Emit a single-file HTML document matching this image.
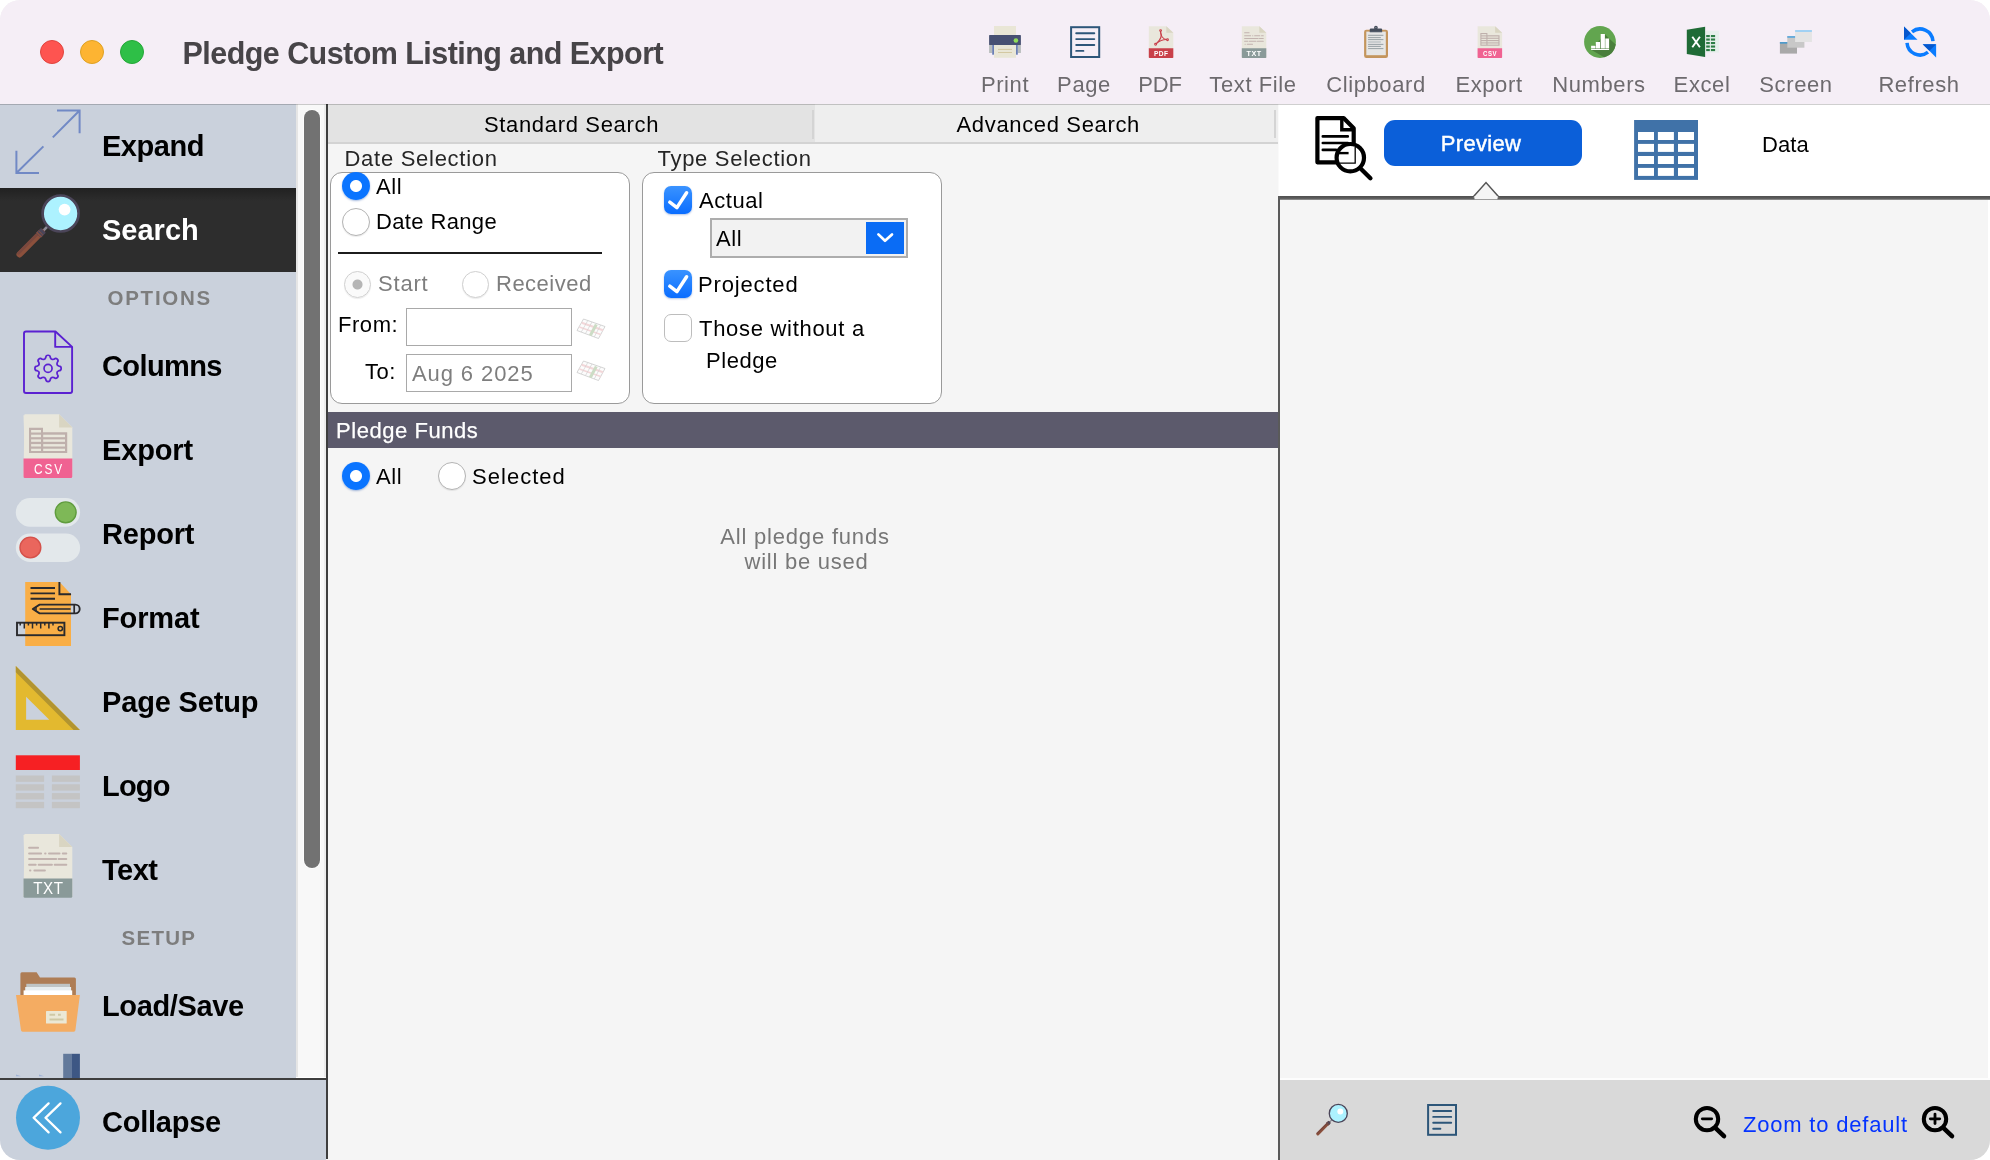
<!DOCTYPE html>
<html lang="en">
<head>
<meta charset="utf-8">
<title>Pledge Custom Listing and Export</title>
<style>
*{box-sizing:border-box;margin:0;padding:0}
html,body{width:1990px;height:1160px;background:#fff;overflow:hidden}
body{font-family:"Liberation Sans",sans-serif;font-size:22px;color:#000;letter-spacing:.55px}
.abs{position:absolute}
#win{will-change:transform;position:absolute;left:0;top:0;width:1990px;height:1160px;border-radius:20px;overflow:hidden;background:#f5f5f5}
/* title bar */
#tb{position:absolute;left:0;top:0;width:1990px;height:104px;background:#f5eef6}
#tbline{position:absolute;left:0;top:104px;width:1990px;height:1px;background:rgba(0,0,0,.19);z-index:5}
.tl{position:absolute;top:40px;width:24px;height:24px;border-radius:50%}
#title{position:absolute;left:182.5px;top:35.6px;font-size:30.5px;font-weight:700;color:#474448;letter-spacing:-.55px;line-height:34px;white-space:nowrap}
.tool{position:absolute;top:72px;height:26px;line-height:26px;font-size:22px;color:#6d6a6e;white-space:nowrap;transform:translateX(-50%);letter-spacing:.6px}
.ticon{position:absolute;top:22px;width:40px;height:40px;transform:translateX(-50%)}
/* sidebar */
#sb{position:absolute;left:0;top:104px;width:296px;height:974px;background:#cad1dc;overflow:hidden}
.si{position:absolute;left:0;width:296px;height:84px}
.si .lbl{position:absolute;left:102px;top:24px;font-size:29px;font-weight:700;line-height:36px;letter-spacing:0;white-space:nowrap}
.si svg{position:absolute;left:0;top:0;width:100px;height:84px}
.sh{position:absolute;white-space:nowrap;font-size:20.5px;font-weight:700;color:#7d7d7d;letter-spacing:1.3px}
#track{position:absolute;left:296px;top:104px;width:30px;height:974px;background:linear-gradient(90deg,#e5e5e5 0,#e5e5e5 2px,#f8f8f8 2.5px,#f8f8f8 27.5px,#ececec 28px,#ececec 100%);border-bottom:1px solid #fff}
#thumb{position:absolute;left:304px;top:110px;width:16px;height:758px;border-radius:8px;background:#727272;box-shadow:0 0 0 1px rgba(255,255,255,.7)}
#vline{position:absolute;left:326px;top:104px;width:2px;height:1055px;background:#3e3e3e}
#sbline{position:absolute;left:0;top:1078px;width:327px;height:2px;background:#3e3e3e}
#col{position:absolute;left:0;top:1080px;width:326px;height:80px;background:#cad1dc}
/* main */
#main{position:absolute;left:328px;top:104px;width:950px;height:1056px;background:#f5f5f5}
.tab{position:absolute;top:104px;height:40px;line-height:41px;text-align:center;font-size:22px;letter-spacing:.5px}
.gl{position:absolute;font-size:22px;line-height:26px;color:#262626;white-space:nowrap}
.box{position:absolute;background:#fff;border:1px solid #9a9a9a;border-radius:12px}
.t{position:absolute;font-size:22px;line-height:26px;white-space:nowrap}
.radio{position:absolute;width:28px;height:28px;border-radius:50%;background:#fff;border:1px solid #b4b4b4;box-shadow:0 1px 1px rgba(0,0,0,.08)}
.radio.on{border:none;background:radial-gradient(circle,#fff 0 5.5px,#0a74ff 6.5px 100%);box-shadow:0 1px 2px rgba(0,60,160,.35)}
.radio.dis{width:27px;height:27px;border-color:#d0d0d0;background:radial-gradient(circle,#b5b5b5 0 4.5px,#fafafa 5.5px 100%)}
.radio.dis0{width:27px;height:27px;border-color:#d0d0d0;background:#fff}
.cb{position:absolute;width:28px;height:28px;border-radius:7px;background:linear-gradient(#3a93ff,#0a6dff);box-shadow:0 1px 2px rgba(0,60,160,.3)}
.cb.off{background:#fff;border:1px solid #bdbdbd;box-shadow:none}
.inp{position:absolute;background:#fff;border:1px solid #a9a9a9;height:38px}
/* right */
#rtop{position:absolute;left:1279px;top:104px;width:711px;height:93px;background:#fff;box-shadow:-1px 0 0 #fafafa}
#rline{position:absolute;left:1278px;top:196px;width:712px;height:4px;background:linear-gradient(#505050,#5c5c5c 60%,#9a9a9a)}
#rv{position:absolute;left:1278px;top:196px;width:2px;height:964px;background:#5a5a5a}
#rbody{position:absolute;left:1280px;top:199px;width:710px;height:879px;background:#f5f5f5;border-right:2px solid #fff}
#rbot{position:absolute;left:1280px;top:1080px;width:710px;height:80px;background:#d9d9d9}
#rbotline{position:absolute;left:1280px;top:1078px;width:710px;height:2px;background:#fdfdfd}
</style>
</head>
<body>
<div id="win">
<!-- TITLEBAR -->
<div id="tb">
 <div class="tl" style="left:40px;background:#fe5450;border:1px solid #e0443e"></div>
 <div class="tl" style="left:80px;background:#fdb432;border:1px solid #dea123"></div>
 <div class="tl" style="left:120px;background:#2ebf47;border:1px solid #24a738"></div>
 <div id="title">Pledge Custom Listing and Export</div>
 <svg class="abs" style="left:960px;top:0" width="1030" height="70" viewBox="960 0 1030 70"><rect x="994" y="26" width="22" height="10" fill="#e9e6d6"/><rect x="989.1" y="45" width="3.2" height="8" fill="#b9bdbd"/><rect x="1017.7" y="45" width="3.2" height="8" fill="#b9bdbd"/><rect x="992.2" y="45" width="1.9" height="9.7" fill="#6a7fb5"/><rect x="1015.9" y="45" width="1.9" height="9.7" fill="#6a7fb5"/><rect x="994" y="45" width="22" height="12.8" fill="#e9e6d6"/><path d="M998 49.4H1012M998 52.5H1012" stroke="#d3c8a2" stroke-width="1" fill="none"/><rect x="989.1" y="35.1" width="31.8" height="10" rx=".6" fill="#475072"/><circle cx="1015.9" cy="40.5" r="2.3" fill="#8fdc5a"/><rect x="1071.1" y="27.2" width="28.1" height="29.8" fill="none" stroke="#2d5679" stroke-width="2"/><path d="M1076.2 33.2h18.1M1076.2 39.1h18.1M1076.2 45.0h18.1M1076.2 50.9h7.2" stroke="#2d5679" stroke-width="1.9" stroke-linecap="round" fill="none"/><path d="M1148.8 26.2H1166.3L1173.3 32.8V58.0H1148.8z" fill="#e9e7dc"/><path d="M1166.3 26.2L1173.3 32.8H1166.3z" fill="#d9d5c2"/><path d="M1148.8 48.3H1173.3V57.2a.8 .8 0 0 1-.8 .8H1149.6a.8 .8 0 0 1-.8-.8z" fill="#c9404a"/><g fill="none" stroke="#c9404a" stroke-width="1.05" stroke-linecap="round"><path d="M1160.500 31.400C1162.200 35.200 1160.800 39.800 1156.300 43.600"/><path d="M1156.300 43.600C1159.200 41.200 1163.300 39.700 1166.600 39.600"/><path d="M1166.600 39.600C1163.300 39.300 1160.200 35.600 1160.500 31.400"/><circle cx="1160.600" cy="30.600" r=".9"/><circle cx="1155.600" cy="44.300" r=".95"/><circle cx="1167.500" cy="39.700" r=".9"/></g><text x="1161.2" y="56" font-family="Liberation Sans, sans-serif" font-weight="700" font-size="7.6" fill="#fff" text-anchor="middle" textLength="14.6" lengthAdjust="spacingAndGlyphs">PDF</text><path d="M1241.8 26.2H1259.3L1266.3 32.8V58.0H1241.8z" fill="#e9e7dc"/><path d="M1259.3 26.2L1266.3 32.8H1259.3z" fill="#d9d5c2"/><path d="M1241.8 48.3H1266.3V57.2a.8 .8 0 0 1-.8 .8H1242.6a.8 .8 0 0 1-.8-.8z" fill="#8a9a99"/><g transform="translate(1230.003 22.9382) scale(0.502)"><path d="M29.1 19.7H38.1M29.1 25.4H41.1M45.1 25.4H45.5M49.0 25.4H59.5M62.8 25.4H66.3M29.1 31.0H56.2M58.6 31.0H66.3M29.1 36.7H35.7M38.7 36.7H51.9M54.7 36.7H66.3M30.0 42.4H30.4M34.4 42.4H44.9" stroke="#c2b3af" stroke-width="2" stroke-linecap="round" fill="none"/></g><text x="1254.2" y="56" font-family="Liberation Sans, sans-serif" font-weight="700" font-size="7.6" fill="#fff" text-anchor="middle" textLength="15.2" lengthAdjust="spacingAndGlyphs">TXT</text><rect x="1364.1" y="29.8" width="23.9" height="28.2" rx="2.2" fill="#c4955d"/><rect x="1366.3" y="31.6" width="19.5" height="23.6" fill="#e6e6e6"/><path d="M1368.1 35.3h15.3M1368.1 37.6h12.8M1368.1 39.6h15.3M1368.1 44.4h15.3M1368.1 46.4h12.8M1368.1 48.6h15.3" stroke="#8e999d" stroke-width=".9" fill="none"/><path d="M1368.1 42h12.8" stroke="#c2c7c9" stroke-width="1.6" fill="none"/><circle cx="1375.9" cy="27.7" r="1.9" fill="#464e5c"/><circle cx="1375.9" cy="27.500" r=".6" fill="#9aa0aa"/><path d="M1370.8 28.600h10.300a1 1 0 0 1 1 1v2.400h-12.300v-2.400a1 1 0 0 1 1-1z" fill="#464e5c"/><rect x="1369.800" y="31.4" width="12.300" height=".9" fill="#5a6372"/><path d="M1477.6 26.2H1495.1L1502.1 32.8V58.0H1477.6z" fill="#e9e7dc"/><path d="M1495.1 26.2L1502.1 32.8H1495.1z" fill="#d9d5c2"/><path d="M1477.6 48.3H1502.1V57.2a.8 .8 0 0 1-.8 .8H1478.4a.8 .8 0 0 1-.8-.8z" fill="#f06292"/><g transform="translate(1465.8029999999999 23.037399999999998) scale(0.502)"><path d="M29 19.8H43V24.2H67.2V45.1H29z" fill="#bfb0ac"/><rect x="31.1" y="22.0" width="9.9" height="2.5" fill="#e9e7dc"/><rect x="31.1" y="26.7" width="9.9" height="2.5" fill="#e9e7dc"/><rect x="43.2" y="26.7" width="21.8" height="2.5" fill="#e9e7dc"/><rect x="31.1" y="31.4" width="9.9" height="2.4" fill="#e9e7dc"/><rect x="43.2" y="31.4" width="21.8" height="2.4" fill="#e9e7dc"/><rect x="31.1" y="36.1" width="9.9" height="2.4" fill="#e9e7dc"/><rect x="43.2" y="36.1" width="21.8" height="2.4" fill="#e9e7dc"/><rect x="31.1" y="40.7" width="9.9" height="2.3" fill="#e9e7dc"/><rect x="43.2" y="40.7" width="21.8" height="2.3" fill="#e9e7dc"/></g><text x="1490.0" y="56" font-family="Liberation Sans, sans-serif" font-weight="700" font-size="7.4" fill="#fff" text-anchor="middle" textLength="13.8" lengthAdjust="spacingAndGlyphs">CSV</text><circle cx="1600" cy="42" r="15.9" fill="#62a54f"/><path d="M1609.100 38.500L1604.900 34.300L1591.100 49.800L1604.200 57.350A15.900 15.900 0 0 0 1615.780 44.600z" fill="#4a7f3c"/><path d="M1591.100 45.800h4.300v2.800h-4.300zM1595.800 42h4.200v6.600h-4.200zM1600.700 34h4.200v14.600h-4.200zM1605.300 38.500h3.800v10.100h-3.800zM1591.100 48.900h18v1h-18z" fill="#fff"/><rect x="1704" y="30.8" width="14.900" height="21.800" fill="#e6efeb"/><rect x="1706.2" y="35.0" width="3.600" height="2.100" fill="#2d7d45"/><rect x="1710.9" y="35.0" width="4.200" height="2.100" fill="#2d7d45"/><rect x="1706.2" y="38.5" width="3.600" height="2.100" fill="#2d7d45"/><rect x="1710.9" y="38.5" width="4.200" height="2.100" fill="#2d7d45"/><rect x="1706.2" y="42.0" width="3.600" height="2.100" fill="#2d7d45"/><rect x="1710.9" y="42.0" width="4.200" height="2.100" fill="#2d7d45"/><rect x="1706.2" y="45.5" width="3.600" height="2.100" fill="#2d7d45"/><rect x="1710.9" y="45.5" width="4.200" height="2.100" fill="#2d7d45"/><rect x="1706.2" y="49.0" width="3.600" height="2.100" fill="#2d7d45"/><rect x="1710.9" y="49.0" width="4.200" height="2.100" fill="#2d7d45"/><path d="M1686.800 29.800L1705.100 26.800V57.100L1686.800 54z" fill="#1f6b36"/><path d="M1692.300 36.700L1699.900 47.300M1699.900 36.700L1692.300 47.300" stroke="#fff" stroke-width="1.900" fill="none"/><rect x="1779.900" y="42" width="17.100" height="11.600" fill="#a9a9a9"/><rect x="1779.900" y="42" width="17.100" height="1.700" fill="#4e9acb"/><rect x="1787.300" y="36.100" width="17.100" height="11.600" fill="#c8c8c8"/><rect x="1787.300" y="36.100" width="17.100" height="1.700" fill="#5ba8dd"/><rect x="1795.100" y="30.200" width="16.800" height="11.800" fill="#e4e4e4"/><rect x="1795.100" y="30.200" width="16.800" height="1.600" fill="#8fcdf7"/><path d="M1912.00 31.76A13 13 0 0 1 1932.97 41.09" fill="none" stroke="#0a7cff" stroke-width="3.500"/><path d="M1907.03 42.91A13 13 0 0 0 1928.00 52.24" fill="none" stroke="#0a7cff" stroke-width="3.500"/><path d="M1904 26.500V39.800H1917.500z" fill="#0a7cff"/><path d="M1904 26.500V39.800L1910.750 33.150z" fill="#0657cc"/><path d="M1936.100 57.500V44.200H1922.700z" fill="#0a7cff"/><path d="M1922.700 44.200H1936.100L1929.400 50.850z" fill="#0657cc"/></svg>
 <div class="tool" style="left:1005px">Print</div>
 <div class="tool" style="left:1084px">Page</div>
 <div class="tool" style="left:1160px;letter-spacing:-.2px">PDF</div>
 <div class="tool" style="left:1253px">Text File</div>
 <div class="tool" style="left:1376px">Clipboard</div>
 <div class="tool" style="left:1489px">Export</div>
 <div class="tool" style="left:1599px">Numbers</div>
 <div class="tool" style="left:1702px">Excel</div>
 <div class="tool" style="left:1796px">Screen</div>
 <div class="tool" style="left:1919px">Refresh</div>
</div>
<div id="tbline"></div>

<!-- SIDEBAR -->
<div id="sb">
 <div class="si" style="top:0px"><svg viewBox="0 0 100 84"><g fill="none" stroke="#7189c5" stroke-width="2"><path d="M57 6.5H79.6V29.2M79.3 6.8L52.8 33.4"/><path d="M39 69H16.4V46.8M16.7 68.7L43.4 42.4"/></g></svg><div class="lbl" style="letter-spacing:-0.48px">Expand</div></div>
 <div class="si" style="top:84px;background:linear-gradient(#212121,#2d2d2d 13px);color:#fff"><svg viewBox="0 0 100 84"><g transform="translate(0 0) scale(1)"><path d="M47.8 38.2L42.6 43.4" stroke="#8d8b96" stroke-width="2.6" fill="none"/><path d="M41.6 44.1L19.6 66.4" stroke="#8b503c" stroke-width="6.2" stroke-linecap="round" fill="none"/><path d="M40.4 42.9L18.4 65.2" stroke="#74463f" stroke-width="2.8" stroke-linecap="round" fill="none" opacity=".75"/><path d="M43.4 42.3L38.4 47.4" stroke="#4b4559" stroke-width="6.8" fill="none"/><path d="M41.0 44.7L38.6 47.1" stroke="#8b503c" stroke-width="6.8" fill="none"/><path d="M40.6 45.1L39.6 46.1" stroke="#4b4559" stroke-width="6.8" fill="none"/><circle cx="60.6" cy="25.5" r="18" fill="#adf2ff" stroke="#4b4559" stroke-width="2.7"/><circle cx="64.6" cy="21.6" r="5.9" fill="#fff"/></g></svg><div class="lbl" style="letter-spacing:0px">Search</div></div>
 <div class="sh" style="top:182px;left:107.5px;letter-spacing:1.75px">OPTIONS</div>
 <div class="si" style="top:220px"><svg viewBox="0 0 100 84"><g fill="none" stroke="#5b21d1" stroke-width="1.9" stroke-linejoin="round"><path d="M26 7.5H55.5L72.1 22.9V67a2 2 0 0 1-2 2H26a2 2 0 0 1-2-2V9.5a2 2 0 0 1 2-2z"/><path d="M55.2 7.5V22.9H72.1"/><path stroke-width="1.7" d="M44.85 35.03L45.80 33.50A2.25 2.25 0 0 1 50.30 33.50L51.25 35.03A9.90 9.90 0 0 1 52.41 35.51L52.41 35.51L54.17 35.10A2.25 2.25 0 0 1 57.35 38.28L56.94 40.04A9.90 9.90 0 0 1 57.42 41.20L57.42 41.20L58.95 42.15A2.25 2.25 0 0 1 58.95 46.65L57.42 47.60A9.90 9.90 0 0 1 56.94 48.76L56.94 48.76L57.35 50.52A2.25 2.25 0 0 1 54.17 53.70L52.41 53.29A9.90 9.90 0 0 1 51.25 53.77L51.25 53.77L50.30 55.30A2.25 2.25 0 0 1 45.80 55.30L44.85 53.77A9.90 9.90 0 0 1 43.69 53.29L43.69 53.29L41.93 53.70A2.25 2.25 0 0 1 38.75 50.52L39.16 48.76A9.90 9.90 0 0 1 38.68 47.60L38.68 47.60L37.15 46.65A2.25 2.25 0 0 1 37.15 42.15L38.68 41.20A9.90 9.90 0 0 1 39.16 40.04L39.16 40.04L38.75 38.28A2.25 2.25 0 0 1 41.93 35.10L43.69 35.51A9.90 9.90 0 0 1 44.85 35.03Z"/><circle cx="48.05" cy="44.4" r="4" stroke-width="1.7"/></g></svg><div class="lbl" style="letter-spacing:-0.6px">Columns</div></div>
 <div class="si" style="top:304px"><svg viewBox="0 0 100 84"><path d="M24.5 6.3H59.1L72.3 19.5V68.9H23.5z" fill="#e9e7dc"/><path d="M23.5 7.3H25.5V68.9z" fill="#e9e7dc"/><path d="M59.1 6.3L72.3 19.5H59.1z" fill="#d9d5c2"/><path d="M23.5 50.6H72.3V68.4a1.5 1.5 0 0 1-1.5 1.5H25.0a1.5 1.5 0 0 1-1.5-1.5z" fill="#f06292"/><g transform="translate(0 0) scale(1)"><path d="M29 19.8H43V24.2H67.2V45.1H29z" fill="#bfb0ac"/><rect x="31.1" y="22.0" width="9.9" height="2.5" fill="#e9e7dc"/><rect x="31.1" y="26.7" width="9.9" height="2.5" fill="#e9e7dc"/><rect x="43.2" y="26.7" width="21.8" height="2.5" fill="#e9e7dc"/><rect x="31.1" y="31.4" width="9.9" height="2.4" fill="#e9e7dc"/><rect x="43.2" y="31.4" width="21.8" height="2.4" fill="#e9e7dc"/><rect x="31.1" y="36.1" width="9.9" height="2.4" fill="#e9e7dc"/><rect x="43.2" y="36.1" width="21.8" height="2.4" fill="#e9e7dc"/><rect x="31.1" y="40.7" width="9.9" height="2.3" fill="#e9e7dc"/><rect x="43.2" y="40.7" width="21.8" height="2.3" fill="#e9e7dc"/></g><text transform="translate(49.1 66.3) scale(0.78 1)" font-family="Liberation Sans, sans-serif" font-size="15.2" fill="#fff" text-anchor="middle" letter-spacing="2.4">CSV</text></svg><div class="lbl" style="letter-spacing:-0.16px">Export</div></div>
 <div class="si" style="top:388px"><svg viewBox="0 0 100 84"><rect x="15.8" y="6.1" width="64.3" height="28.6" rx="14.3" fill="#e3e8eb"/><circle cx="65.7" cy="20.3" r="10.4" fill="#7eb857" stroke="#5f9c3d" stroke-width="1.4"/><rect x="15.8" y="41.5" width="64.3" height="28.4" rx="14.2" fill="#e3e8eb"/><circle cx="30.4" cy="55.5" r="10.4" fill="#ea665d" stroke="#d5514a" stroke-width="1.4"/></svg><div class="lbl" style="letter-spacing:-0.2px">Report</div></div>
 <div class="si" style="top:472px"><svg viewBox="0 0 100 84"><path d="M25.2 6.1H59.6L71 18.2V69.9H25.2z" fill="#f9ae46"/><g fill="none" stroke="#2a2a2d" stroke-width="1.9"><path d="M59.4 6.1V18.3H71"/><path d="M30.5 12H55M30.5 17.4H55M30.5 22.7H55"/><path d="M39.6 28.6H75.3A4.4 4.4 0 0 1 75.3 37.4H39.6L32.8 33z" stroke-linejoin="round"/><path d="M39.6 33H70.6M74.2 28.6V37.4" stroke-width="1.7"/><path d="M36 30.8V35.2" stroke-width="1.5"/><rect x="17" y="46.7" width="47.4" height="12.5"/><path d="M20.2 46.7V49.6M24.3 46.7V52.4M28.4 46.7V49.6M32.5 46.7V52.4M36.6 46.7V49.6M40.7 46.7V52.4M44.8 46.7V49.6M48.9 46.7V52.4M53.0 46.7V49.6" stroke-width="1.5"/><circle cx="60.3" cy="52.6" r="2.2" stroke-width="1.5"/></g></svg><div class="lbl" style="letter-spacing:-0.12px">Format</div></div>
 <div class="si" style="top:556px"><svg viewBox="0 0 100 84"><path d="M15.8 5.9V69.9H79.9z" fill="#e3b92f"/><path d="M15.8 5.9L79.9 69.9H73.6L15.8 12.2z" fill="#b29430"/><path d="M26.1 36.7V59.8H49.3z" fill="#cad1dc"/></svg><div class="lbl" style="letter-spacing:-0.16px">Page Setup</div></div>
 <div class="si" style="top:640px"><svg viewBox="0 0 100 84"><rect x="15.8" y="11.3" width="64.1" height="14.7" fill="#f62023"/><rect x="15.8" y="31.5" width="28.3" height="6.3" fill="#c4c4c4"/><rect x="51.9" y="31.5" width="28" height="6.3" fill="#c4c4c4"/><rect x="15.8" y="40.3" width="28.3" height="6.3" fill="#c4c4c4"/><rect x="51.9" y="40.3" width="28" height="6.3" fill="#c4c4c4"/><rect x="15.8" y="49.1" width="28.3" height="6.3" fill="#c4c4c4"/><rect x="51.9" y="49.1" width="28" height="6.3" fill="#c4c4c4"/><rect x="15.8" y="57.9" width="28.3" height="6.3" fill="#c4c4c4"/><rect x="51.9" y="57.9" width="28" height="6.3" fill="#c4c4c4"/></svg><div class="lbl" style="letter-spacing:-.8px">Logo</div></div>
 <div class="si" style="top:724px"><svg viewBox="0 0 100 84"><path d="M24.5 5.9H59.1L72.3 19.1V68.8H23.5z" fill="#e9e7dc"/><path d="M23.5 6.9H25.5V68.8z" fill="#e9e7dc"/><path d="M59.1 5.9L72.3 19.1H59.1z" fill="#d9d5c2"/><path d="M23.5 50.5H72.3V68.3a1.5 1.5 0 0 1-1.5 1.5H25.0a1.5 1.5 0 0 1-1.5-1.5z" fill="#8a9a99"/><g transform="translate(0 0) scale(1)"><path d="M29.1 19.7H38.1M29.1 25.4H41.1M45.1 25.4H45.5M49.0 25.4H59.5M62.8 25.4H66.3M29.1 31.0H56.2M58.6 31.0H66.3M29.1 36.7H35.7M38.7 36.7H51.9M54.7 36.7H66.3M30.0 42.4H30.4M34.4 42.4H44.9" stroke="#c2b3af" stroke-width="2" stroke-linecap="round" fill="none"/></g><text transform="translate(48.4 66.2) scale(0.96 1)" font-family="Liberation Sans, sans-serif" font-size="15.8" fill="#fff" text-anchor="middle" letter-spacing="0.5">TXT</text></svg><div class="lbl" style="letter-spacing:-0.5px">Text</div></div>
 <div class="sh" style="top:822px;left:121.5px">SETUP</div>
 <div class="si" style="top:860px"><svg viewBox="0 0 100 84"><path d="M20.4 9.7a1.5 1.5 0 0 1 1.5-1.5H36.6L40 13.4H74.4a1.5 1.5 0 0 1 1.5 1.5V34H20.4z" fill="#ae7d55"/><rect x="26.3" y="19.8" width="43.7" height="5" fill="#bfc4c4"/><rect x="25.2" y="23" width="45.9" height="6" fill="#e7edef"/><rect x="23.6" y="26.4" width="48.6" height="7" fill="#ffffff"/><path d="M16 30.9H79.9L75.4 66.3a1.6 1.6 0 0 1-1.6 1.4H22.6a1.6 1.6 0 0 1-1.6-1.4z" fill="#f4ac62"/><rect x="46" y="46.9" width="20.7" height="12.7" rx=".6" fill="#ebe8d5"/><path d="M49.5 50.7H55.1M58 50.7H60.8M49.5 55.5H63.5" stroke="#cfc9a5" stroke-width="1.9" fill="none"/></svg><div class="lbl" style="letter-spacing:-0.36px">Load/Save</div></div>
 <div class="si" style="top:944px"><svg viewBox="0 0 100 84"><rect x="63.2" y="5.8" width="8.4" height="30" fill="#62799b"/><rect x="71.5" y="5.8" width="8.4" height="30" fill="#3d5784"/><path d="M16 26.5L21 28.3H16zM39 26.5L44 28.3H39z" fill="#9fb2d6"/></svg></div>
</div>
<div id="track"></div><div id="thumb"></div>
<div id="col"><svg class="abs" style="left:0;top:0" width="100" height="80" viewBox="0 0 100 80"><circle cx="48" cy="37.8" r="32" fill="#4ca6dc"/><path d="M48.6 23.4L33.6 37.8L48.6 52.4M60.5 23.4L45.5 37.8L60.5 52.4" fill="none" stroke="#fff" stroke-width="2.3" stroke-linecap="round" stroke-linejoin="round"/></svg><div class="abs" style="left:102px;top:24px;font-size:29px;font-weight:700;line-height:36px;letter-spacing:-.24px">Collapse</div></div>
<div id="sbline"></div><div id="vline"></div>

<!-- MAIN -->
<div id="main"></div>
<div class="tab" style="left:328px;width:487px;background:#e3e3e3;border-bottom:2px solid #d3d3d3;letter-spacing:.67px">Standard Search</div>
<div class="tab" style="left:815px;width:463px;padding-left:3.5px;background:#eeeeee;border-bottom:2px solid #d3d3d3;letter-spacing:.65px">Advanced Search</div>
<div class="abs" style="left:812px;top:110px;width:2px;height:29px;background:#d4d4d4"></div>
<div class="abs" style="left:1274px;top:110px;width:2px;height:28px;background:#d4d4d4"></div>
<div class="gl" style="left:344.5px;top:146px;letter-spacing:.72px">Date Selection</div>
<div class="gl" style="left:657.5px;top:146px;letter-spacing:.71px">Type Selection</div>
<div class="box" style="left:330px;top:172px;width:300px;height:232px"></div>
<div class="box" style="left:642px;top:172px;width:300px;height:232px"></div>
<!-- date box -->
<div class="radio on" style="left:342px;top:172px"></div><div class="t" style="left:376px;top:174px">All</div>
<div class="radio" style="left:342px;top:208px"></div><div class="t" style="left:376px;top:209px;letter-spacing:.36px">Date Range</div>
<div class="abs" style="left:338px;top:252px;width:264px;height:2px;background:#1c1c1c"></div>
<div class="radio dis" style="left:344px;top:271px"></div><div class="t" style="left:378px;top:271px;color:#7e7e7e;letter-spacing:.8px">Start</div>
<div class="radio dis0" style="left:462px;top:271px"></div><div class="t" style="left:496px;top:271px;color:#7e7e7e;letter-spacing:.5px">Received</div>
<div class="t" style="left:338px;top:312px">From:</div>
<div class="inp" style="left:406px;top:308px;width:166px"></div>
<div class="t" style="left:365px;top:359px">To:</div>
<div class="inp" style="left:406px;top:354px;width:166px"></div><div class="t" style="left:412px;top:361px;color:#7e7e7e;letter-spacing:.9px">Aug 6 2025</div>
<svg class="abs" style="left:576px;top:318px;opacity:.62" width="30" height="22" viewBox="0 0 30 22"><path d="M7.5 1L29 8.500L22.500 20.500L1 12.500z" fill="#fbfbfb" stroke="#a8a8a8" stroke-width=".8"/><path d="M5.700 4.800L27 12.300" stroke="#ecc0c3" stroke-width="2.200"/><path d="M3.400 8.900L24.700 16.400" stroke="#ecc0c3" stroke-width="1.600"/><path d="M20.300 6.500L14.300 17.500" stroke="#aec7a3" stroke-width="3"/><path d="M11.800 2.500L5.300 14M16 4L9.500 15.500M24.700 7L18.200 19" stroke="#b5b5b5" stroke-width=".7" fill="none"/></svg><svg class="abs" style="left:576px;top:360px;opacity:.62" width="30" height="22" viewBox="0 0 30 22"><path d="M7.5 1L29 8.500L22.500 20.500L1 12.500z" fill="#fbfbfb" stroke="#a8a8a8" stroke-width=".8"/><path d="M5.700 4.800L27 12.300" stroke="#ecc0c3" stroke-width="2.200"/><path d="M3.400 8.900L24.700 16.400" stroke="#ecc0c3" stroke-width="1.600"/><path d="M20.300 6.500L14.300 17.500" stroke="#aec7a3" stroke-width="3"/><path d="M11.800 2.500L5.300 14M16 4L9.500 15.500M24.700 7L18.200 19" stroke="#b5b5b5" stroke-width=".7" fill="none"/></svg>
<!-- type box -->
<div class="cb" style="left:664px;top:186px"><svg class="abs" style="left:0;top:0" width="28" height="28" viewBox="0 0 28 28"><path d="M5.800 16.200L12.900 21.600L22.600 6.800" fill="none" stroke="#fff" stroke-width="3.500" stroke-linecap="round" stroke-linejoin="round"/></svg></div><div class="t" style="left:699px;top:188px">Actual</div>
<div class="abs" style="left:710px;top:218px;width:198px;height:40px;background:#f2f2f2;border:2px solid #adadad"></div>
<div class="t" style="left:716px;top:226px">All</div>
<div class="abs" style="left:866px;top:222px;width:38px;height:32px;background:#0a6cf5"><svg class="abs" style="left:0;top:0" width="38" height="32" viewBox="0 0 38 32"><path d="M12.400 12.400L19 18.800L26 12.400" fill="none" stroke="#fff" stroke-width="2.700" stroke-linecap="round" stroke-linejoin="round"/></svg></div>
<div class="cb" style="left:664px;top:270px"><svg class="abs" style="left:0;top:0" width="28" height="28" viewBox="0 0 28 28"><path d="M5.800 16.200L12.900 21.600L22.600 6.800" fill="none" stroke="#fff" stroke-width="3.500" stroke-linecap="round" stroke-linejoin="round"/></svg></div><div class="t" style="left:698px;top:272px;letter-spacing:.84px">Projected</div>
<div class="cb off" style="left:664px;top:314px"></div><div class="t" style="left:699px;top:316px;letter-spacing:.7px">Those without a</div>
<div class="t" style="left:706px;top:348px">Pledge</div>
<!-- pledge funds -->
<div class="abs" style="left:328px;top:412px;width:950px;height:36px;background:#5c5a6c"></div>
<div class="t" style="left:336px;top:418px;color:#fff;-webkit-text-stroke:.25px #fff">Pledge Funds</div>
<div class="radio on" style="left:342px;top:462px"></div><div class="t" style="left:376px;top:464px">All</div>
<div class="radio" style="left:438px;top:462px"></div><div class="t" style="left:472px;top:464px;letter-spacing:1.03px">Selected</div>
<div class="t" style="left:605px;width:400px;top:524px;text-align:center;color:#777;letter-spacing:.81px">All pledge funds</div>
<div class="t" style="left:605px;width:400px;top:549px;text-align:center;color:#777;letter-spacing:.75px;padding-left:3px">will be used</div>

<!-- RIGHT -->
<div id="rtop"></div><div id="rbody"></div><div id="rbot"></div><div id="rbotline"></div>
<div id="rline"></div><div id="rv"></div>
<svg class="abs" style="left:1300px;top:106px" width="420" height="95" viewBox="1300 106 420 95"><g fill="none" stroke="#000" stroke-linejoin="miter"><path d="M1317.400 118.100H1343.600L1353.700 128.200V162.300H1317.400z" stroke-width="4.200" stroke-linejoin="round"/><path d="M1341.800 118.100V129.800H1353.700" stroke-width="3.400"/><path d="M1322.800 136.400H1347.800M1322.800 143H1347.800M1322.800 149.900H1336" stroke-width="2.600" stroke-linecap="round"/></g><circle cx="1350.300" cy="157.700" r="13.700" fill="#fff" stroke="#000" stroke-width="4.200"/><path d="M1355.200 147V163.200H1339.500" fill="none" stroke="#000" stroke-width="1.300"/><path d="M1339 153.100H1348.600" fill="none" stroke="#000" stroke-width="2.400"/><path d="M1360.300 168.300L1370.400 178.200" fill="none" stroke="#000" stroke-width="4.400" stroke-linecap="round"/><path d="M1472.700 197.600L1486 182.600L1499.300 197.600" fill="#f5f5f5" stroke="#555" stroke-width="1.500"/><rect x="1474.500" y="196" width="23" height="3.200" fill="#f5f5f5"/><rect x="1634.100" y="120" width="63.900" height="59.900" fill="#4072a8"/><g fill="#fff"><rect x="1638.0" y="132.0" width="16" height="8"/><rect x="1638.0" y="143.9" width="16" height="8"/><rect x="1638.0" y="156.0" width="16" height="8"/><rect x="1638.0" y="167.9" width="16" height="8"/><rect x="1657.9" y="132.0" width="16" height="8"/><rect x="1657.9" y="143.9" width="16" height="8"/><rect x="1657.9" y="156.0" width="16" height="8"/><rect x="1657.9" y="167.9" width="16" height="8"/><rect x="1678.0" y="132.0" width="16" height="8"/><rect x="1678.0" y="143.9" width="16" height="8"/><rect x="1678.0" y="156.0" width="16" height="8"/><rect x="1678.0" y="167.9" width="16" height="8"/></g></svg>
<div class="abs" style="left:1384px;top:120px;width:198px;height:46px;border-radius:11px;background:#0b5fd9;color:#fff;text-align:center;line-height:47px;font-size:22px;font-weight:400;letter-spacing:.3px;padding-right:4px;-webkit-text-stroke:.45px #fff">Preview</div>

<div class="t" style="left:1762px;top:132px;font-size:22px;letter-spacing:.1px">Data</div>

<svg class="abs" style="left:1300px;top:1090px" width="680" height="60" viewBox="1300 1090 680 60"><g transform="translate(1308.0 1100.7) scale(0.5)"><path d="M47.8 38.2L42.6 43.4" stroke="#8d8b96" stroke-width="2.6" fill="none"/><path d="M41.6 44.1L19.6 66.4" stroke="#8b503c" stroke-width="6.2" stroke-linecap="round" fill="none"/><path d="M40.4 42.9L18.4 65.2" stroke="#74463f" stroke-width="2.8" stroke-linecap="round" fill="none" opacity=".75"/><path d="M43.4 42.3L38.4 47.4" stroke="#4b4559" stroke-width="6.8" fill="none"/><path d="M41.0 44.7L38.6 47.1" stroke="#8b503c" stroke-width="6.8" fill="none"/><path d="M40.6 45.1L39.6 46.1" stroke="#4b4559" stroke-width="6.8" fill="none"/><circle cx="60.6" cy="25.5" r="18" fill="#adf2ff" stroke="#4b4559" stroke-width="2.7"/><circle cx="64.6" cy="21.6" r="5.9" fill="#fff"/></g><rect x="1428.1" y="1105.0" width="27.900" height="29.800" fill="none" stroke="#2d5679" stroke-width="2"/><path d="M1433.2 1111.0h18M1433.2 1116.9h18M1433.2 1122.8h18M1433.2 1128.7h7.200" stroke="#2d5679" stroke-width="1.900" stroke-linecap="round" fill="none"/><circle cx="1707.0" cy="1119.100" r="11.200" fill="none" stroke="#000" stroke-width="4"/><path d="M1716.4 1128.800L1724.0 1136.100" stroke="#000" stroke-width="4.600" stroke-linecap="round"/><path d="M1702.3 1118.800h9.400" stroke="#000" stroke-width="2.800" stroke-linecap="round"/><circle cx="1935.0" cy="1119.100" r="11.200" fill="none" stroke="#000" stroke-width="4"/><path d="M1944.4 1128.800L1952.0 1136.100" stroke="#000" stroke-width="4.600" stroke-linecap="round"/><path d="M1930.3 1118.800h9.400" stroke="#000" stroke-width="2.800" stroke-linecap="round"/><path d="M1935.0 1114.100v9.400" stroke="#000" stroke-width="2.800" stroke-linecap="round"/></svg>
<div class="t" style="left:1743px;top:1112px;color:#0433ff;letter-spacing:.8px">Zoom to default</div>
</div>
</body>
</html>
